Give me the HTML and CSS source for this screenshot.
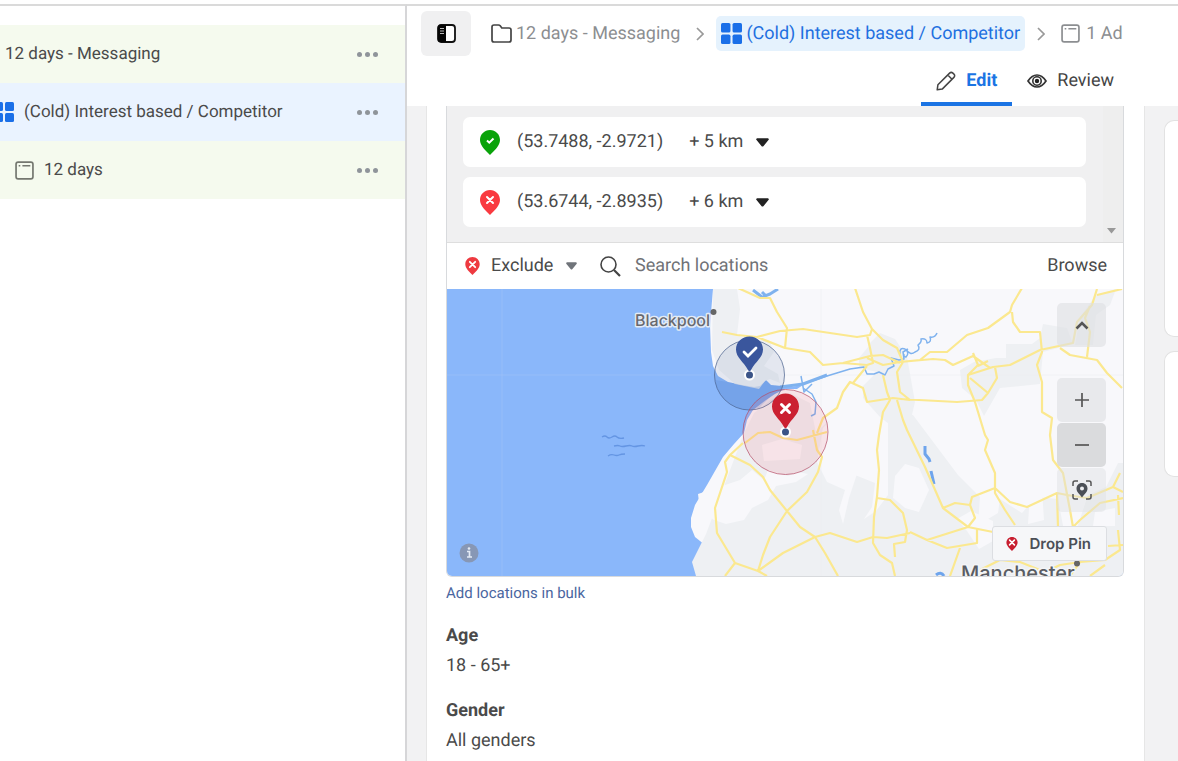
FILE: index.html
```html
<!DOCTYPE html>
<html lang="en">
<head>
<meta charset="utf-8">
<title>Edit ad set</title>
<link rel="stylesheet" href="styles.css">
</head>
<body>
<svg class="defs" width="0" height="0" aria-hidden="true">
  <symbol id="pin" viewBox="0 0 20 25"><path d="M10 0C4.400 0 0 4.400 0 10c0 5.600 5.500 10.500 10 15 4.500-4.500 10-9.400 10-15C20 4.400 15.600 0 10 0z"/></symbol>
  <symbol id="cross" viewBox="0 0 10 10"><path d="M2 2l6 6M8 2l-6 6" fill="none" stroke="#fff" stroke-width="2" stroke-linecap="round"/></symbol>
  <symbol id="grid" viewBox="0 0 20 20"><rect width="9" height="9" rx="1.500"/><rect x="11" width="9" height="9" rx="1.500"/><rect y="11" width="9" height="9" rx="1.500"/><rect x="11" y="11" width="9" height="9" rx="1.500"/></symbol>
  <symbol id="ad" viewBox="0 0 18 18"><rect x="1" y="1" width="16" height="16" rx="2" fill="none" stroke="currentColor" stroke-width="1.600"/><path d="M3.500 4.500h1.500M7 4.500h7.500" stroke="currentColor" stroke-width="1.300"/></symbol>
  <symbol id="dots" viewBox="0 0 21 5"><circle cx="2.500" cy="2.500" r="2.500"/><circle cx="10.500" cy="2.500" r="2.500"/><circle cx="18.500" cy="2.500" r="2.500"/></symbol>
  <symbol id="caret" viewBox="0 0 12 8"><path d="M1 0h10q1.400.600.500 1.800L7 7.200q-1 1.200-2 0L.500 1.800Q-.400.600 1 0z"/></symbol>
  <symbol id="chevron" viewBox="0 0 8 14"><path d="M1 1l6 6-6 6" fill="none" stroke="currentColor" stroke-width="1.700"/></symbol>
</svg>

<div class="app">
  <nav class="tree" aria-label="Campaign structure">
    <div class="tree-row">
      <a class="tree-link campaign" href="#">12 days - Messaging</a>
      <button class="more" aria-label="More options"><svg width="21" height="5"><use href="#dots"/></svg></button>
    </div>
    <div class="tree-row selected">
      <a class="tree-link adset" href="#"><svg class="blue" width="20" height="20"><use href="#grid"/></svg>(Cold) Interest based / Competitor</a>
      <button class="more" aria-label="More options"><svg width="21" height="5"><use href="#dots"/></svg></button>
    </div>
    <div class="tree-row">
      <a class="tree-link ad" href="#"><svg class="soft" width="19" height="19"><use href="#ad"/></svg>12 days</a>
      <button class="more" aria-label="More options"><svg width="21" height="5"><use href="#dots"/></svg></button>
    </div>
  </nav>

  <div class="editor">
    <header class="header">
      <div class="crumbs">
        <button class="toggle" aria-label="Toggle side panel">
          <svg width="19" height="19" viewBox="0 0 19 19"><rect x="1" y="1" width="17" height="17" rx="3" fill="#fff" stroke="#111" stroke-width="1.800"/><path d="M3 1h6v17H3q-2 0-2-2V3q0-2 2-2z" fill="#050505"/><path d="M3 4.500h4M3 7h4M3 9.500h4" stroke="#bbb" stroke-width="1"/></svg>
        </button>
        <a class="crumb folder" href="#"><svg width="21" height="19" viewBox="0 0 21 19"><path d="M1 3q0-2 2-2h4.500q1 0 1.700.800L10.800 4H18q2 0 2 2v10q0 2-2 2H3q-2 0-2-2z" fill="none" stroke="#444" stroke-width="1.700"/></svg>12 days - Messaging</a>
        <svg class="sep" width="8" height="14"><use href="#chevron"/></svg>
        <a class="crumb current" href="#"><svg class="blue" width="21" height="21"><use href="#grid"/></svg>(Cold) Interest based / Competitor</a>
        <svg class="sep" width="8" height="14"><use href="#chevron"/></svg>
        <a class="crumb last" href="#"><svg width="19" height="19"><use href="#ad"/></svg>1 Ad</a>
      </div>
      <div class="tabs" role="tablist">
        <button class="tab active" role="tab" aria-selected="true"><svg width="20" height="20" viewBox="0 0 20 20"><path d="M1.200 18.800l.7-5L13.600 2.100q1.600-1.500 3.300 0l1 1q1.500 1.600 0 3.300L6.200 18.100zM11.800 4l4.200 4.200" fill="none" stroke="#444" stroke-width="1.500" stroke-linejoin="round"/></svg>Edit</button>
        <button class="tab" role="tab" aria-selected="false"><svg width="20" height="14" viewBox="0 0 20 14"><path d="M1 7q4-6 9-6t9 6q-4 6-9 6T1 7z" fill="#fff" stroke="#333" stroke-width="1.700"/><circle cx="10" cy="7" r="4.200" fill="none" stroke="#333" stroke-width="1.600"/><circle cx="10" cy="7" r="2.200" fill="#222"/></svg>Review</button>
      </div>
    </header>

    <div class="body">
      <main class="card">
        <section class="locations" aria-label="Locations">
          <div class="chosen">
            <ul class="list">
              <li class="place">
                <svg width="20" height="25"><use href="#pin" fill="#0aa30a"/><path d="M7 10.500l2.300 2.200L13.500 8.500" fill="none" stroke="#fff" stroke-width="2"/></svg>
                <span class="coords">(53.7488, -2.9721)</span>
                <label class="pick"><select class="radius" aria-label="Radius"><option>+ 5 km</option></select><svg width="13" height="9"><use href="#caret"/></svg></label>
              </li>
              <li class="place">
                <svg width="20" height="25"><use href="#pin" fill="#f93a40"/><use href="#cross" x="5" y="5" width="10" height="10"/></svg>
                <span class="coords">(53.6744, -2.8935)</span>
                <label class="pick"><select class="radius" aria-label="Radius"><option>+ 6 km</option></select><svg width="13" height="9"><use href="#caret"/></svg></label>
              </li>
            </ul>
            <div class="scroller"><svg width="9" height="6" viewBox="0 0 9 6"><path d="M0 0h9L4.500 5.500z" fill="#999"/></svg></div>
          </div>

          <div class="search">
            <svg width="15" height="18"><use href="#pin" fill="#ee3a40" width="15" height="18"/><use href="#cross" x="3" y="3" width="9" height="9"/></svg>
            <label class="pick"><select class="mode" aria-label="Include or exclude"><option>Exclude</option></select><svg class="grey" width="11" height="8"><use href="#caret"/></svg></label>
            <svg class="lens" width="21" height="21" viewBox="0 0 21 21"><circle cx="8.500" cy="8.500" r="7.500" fill="none" stroke="#444" stroke-width="1.600"/><path d="M14 14l6 6" stroke="#444" stroke-width="2.200"/></svg>
            <input class="query" type="text" placeholder="Search locations" aria-label="Search locations">
            <button class="browse">Browse</button>
          </div>

          <div class="map">
            <svg class="terrain" viewBox="447 289 676 287" preserveAspectRatio="xMidYMid slice" role="img" aria-label="Map of Lancashire">
              <rect x="400" y="240" width="800" height="400" fill="#8ab7fa"/>
              <path fill="#f8f8fb" d="M713 240V289L710 325 711 352 713 366 718 376 728 382 742 385 754 387 760 386 766 380 771 385 781 386 790 387 803 385 797 389 785 389 775 394 766 400 753 410 747 420 744 433 734 444 723 457 715 471 707 485 695 505 691 518 691 527 695 537 705 545 708 553 709 563 713 576V640H1200V240z"/>
              <g fill="#eef0f3">
                <path d="M713 289h24l3 20-3 26 12 5 20 0 5 12-10 14 14 8 2 9-10-4-5 2-6 8-24-5-16-14-7-20z"/>
                <path d="M868 345l12-12 15 6 12 18 8 45-6 25-10 4-18-13-18-20 0-12 14-14-18-4 0-10 10-12z"/>
                <path d="M744 433l10-20 18-14 18-6 20 10 6 30 12-12 6 4-3 32 6 8 18 10 20 8-3 24-8 12 12-8 12-16v-80h25l45 60 22 22-2 28 20-12 2-14 22 14 14-16 22 2 6 32 12 0 12-36 18-8 12-24 20 0 16 48v104H713l-5-23-12-16-4-14 14-28z"/>
                <path d="M960 370l14-8 22-4 10 0 0-14 26 0 8-6 3-14 24 4 6 16-30 8-3 32-40 4-16 28-8-16-14-12z"/>
                <path d="M1075 345l5-28 16-22 20-6-6 16-14 10-3 30z"/>
              </g>
              <g fill="#f8f8fb">
                <path d="M740 480l12-10 12 10 4-10 20 6 10-4 10 2-12 8-20 4-8 14-16 8-8 12-18 4-12-4-14-10-2-16z"/>
                <path d="M703 492l12 8-8 14-12-6z"/>
                <path d="M823 428l20-20 34 20-4 34-16 12-8 24-6 26-4-14 6-20-18-8-10-20z"/>
                <path d="M895 476l10-12 14 4 10 22-10 22-14-4-12-10z"/>
                <path d="M957 519l14-8 22 10 0 20-14 8-12-18zM1095 512l20-4 0 18-22 0zM1030 494l12-4 2 30-16 4z"/>
                <path d="M762 445l20-6 20 6-2 14-36 2z"/>
              </g>
              <path d="M447 375H711M502 289V576" fill="none" stroke="#a4c4fa" stroke-opacity=".5"/>
              <path d="M785 375H1123M821 289V576" fill="none" stroke="#eceef2" stroke-opacity=".6"/>
              <g fill="none" stroke="#7fb2ee" stroke-width="1.500" stroke-linejoin="round">
                <path stroke-width="3" d="M780 387L803 384 827 375"/>
                <path d="M803 384L827 376 850 369 864 367 867 374 874 374 879 372 885 375 888 369 894 366 891 358 899 360 904 359 903 352 908 349M801 376l3 16 8-8M803 388l9 6 4 8-1 12-4 2"/>
                <path d="M900 354q-1-7 5-5 5 4 1 8-3 0-2-3M906 349q4 7 9 3 6-2 3-7 4-3 3-6 6-1 6 4 5-1 3-6 5 1 7-4"/>
                <path stroke-width="3" d="M753 290l9 7 8-3 8-5M762 292l3 3"/>
                <path stroke-width="3" stroke="#6ea4ec" d="M925 446l0 8 4 5 1 3M931 471l3 13M936 575q5-4 8 1"/>
              </g>
              <path fill="none" stroke="#fbe88f" stroke-width="2.200" stroke-linejoin="round" d="M738 288L760 298 770 298 777 312 787 328 785 348M722 332L737 335 757 337 780 331 803 329 830 333 857 337 870 335 872 329M855 288L863 312 872 329 883 340 897 348 903 362 897 372 900 392 910 400M757 337L785 348 810 352 823 365 843 363 870 356 883 355 900 363M843 363L867 365 873 363 870 348 867 335M867 358L883 365 900 362M817 433L823 418 837 408 843 392 850 382 863 388 867 402 893 398 910 400M867 366L853 383M883 375L887 392 890 400 883 412 879 435 877 450 879 470 877 497 874 517 873 543 880 555 892 563 895 576M897 400L903 420 907 430 925 467 943 508 968 527 993 532M743 443L730 455 725 462 727 472 715 508 717 533 735 563 758 571 767 576M730 455L750 465 763 477 770 490 787 511 800 527 815 537 825 553 838 576M813 430L817 450 822 457 818 472 807 492 787 511 770 537 763 555 758 571M758 571L783 553 815 537 830 533 857 542 873 537 887 538 910 533M877 498L890 500 903 513 907 530 905 542 894 544 895 557M745 443L758 433 770 432 783 438 797 440 827 432M735 563L725 576M1022 288L1012 305 1010 312 988 328 967 335 947 352 930 352 920 360 900 362 933 359 945 360 953 365 973 356 990 368M1012 312L1013 322 1020 332 1040 332 1042 352 1037 365 1042 382 1042 412 1052 418 1050 435 1053 460 1063 473 1070 510 1073 527 1080 520 1100 503 1123 498M968 375L993 367 1010 365 1040 350 1073 343 1077 322 1092 305 1097 289M1097 295L1122 289M1060 348L1070 355 1097 360 1107 373 1122 388M1087 357L1090 332 1085 318 1090 306M973 353L978 365 968 375 968 385 975 402 985 435 988 440 985 450 995 473 995 493 1005 510 1015 525M995 367L997 378 988 393 982 400 957 402 900 399M970 378L988 393M978 366L988 361M943 508L955 503 970 505 972 497 995 488 1010 502 1027 507 1057 493 1067 495 1087 498 1113 487 1120 473M970 505L975 518 968 527 927 540 910 532M927 540L947 548 977 543 977 528M960 548L950 576M1057 493L1058 527M1113 487L1123 492M1118 495l1 20M980 570L1000 560 1020 562 1045 572 1060 565 1080 562 1105 560 1120 550 1118 530M1080 562L1070 576M1090 576L1105 565M1108 546L1123 545"/>
              <path d="M602 437q3-2 5 0t5 0 5 0 7 1M614 446q4-1 6 0t6 0 6 0 6 0 7 0M608 456q3-2 6-1t5 0 6-1" fill="none" stroke="#6495e3" stroke-width="1.300"/>
              <circle cx="749.500" cy="375" r="35" fill="#3b5998" fill-opacity=".1" stroke="#4f6590" stroke-opacity=".75"/>
              <path d="M728 382l14 3 12 2 6-1 6-6 5 5 11 1-1 4-10 6-12 12q-20 6-35-9-8-9-9-19z" fill="#477fd0" fill-opacity=".2"/>
              <circle cx="785.500" cy="432" r="42.500" fill="#fa3e50" fill-opacity=".11" stroke="#b44b65" stroke-opacity=".7"/>
              <g stroke="#fff" stroke-width="2">
                <circle cx="749.500" cy="375" r="4.500" fill="#3b5487"/><circle cx="785.500" cy="432" r="4.500" fill="#3b5487"/>
              </g>
              <path d="M749.500 336.500c-7.500 0-13.500 5.500-13.500 13 0 8 7.500 12 12 20.500q1.500 2.500 3 0c4.500-8.500 12-12.500 12-20.500 0-7.500-6-13-13.500-13z" fill="#3a569d"/>
              <path d="M744 352l4 4 8-8" fill="none" stroke="#fff" stroke-width="2.800" stroke-linecap="round"/>
              <path d="M785.500 393.500c-7.500 0-13.500 5.500-13.500 13 0 8 7.500 12 12 20.500q1.500 2.500 3 0c4.500-8.500 12-12.500 12-20.500 0-7.500-6-13-13.500-13z" fill="#cb2031"/>
              <path d="M781.500 404.500l8 8M789.500 404.500l-8 8" fill="none" stroke="#fff" stroke-width="3" stroke-linecap="round"/>
              <circle cx="713.500" cy="312" r="3" fill="#666"/><circle cx="1077" cy="563.500" r="3" fill="#666"/>
              <text class="town" x="635" y="326">Blackpool</text>
              <text class="city" x="961" y="580">Manchester</text>
            </svg>
            <div class="controls">
              <button class="ctl" aria-label="Collapse map"><svg width="14" height="9" viewBox="0 0 14 9"><path d="M1.500 7.500L7 2l5.500 5.500" fill="none" stroke="#555" stroke-width="2.600"/></svg></button>
              <div class="zoom">
                <button class="ctl" aria-label="Zoom in"><svg width="14" height="14" viewBox="0 0 14 14"><path d="M7 0v14M0 7h14" stroke="#555" stroke-width="1.700"/></svg></button>
                <button class="ctl dim" aria-label="Zoom out"><svg width="14" height="14" viewBox="0 0 14 14"><path d="M0 7h14" stroke="#555" stroke-width="1.700"/></svg></button>
                <button class="ctl light" aria-label="Centre map"><svg width="20" height="20" viewBox="0 0 20 20"><path d="M1 6V3q0-2 2-2h3M14 1h3q2 0 2 2v3M19 14v3q0 2-2 2h-3M6 19H3q-2 0-2-2v-3" fill="none" stroke="#555" stroke-width="1.500"/><path d="M10 3C6.500 3 4.500 5.500 4.500 8.500c0 3.500 3 5.500 5.500 9 2.500-3.500 5.500-5.500 5.500-9C15.500 5.500 13.500 3 10 3zm0 3.500a2 2 0 010 4 2 2 0 010-4z" fill="#4b4f56" fill-rule="evenodd"/></svg></button>
              </div>
            </div>
            <button class="info" aria-label="Map information"><svg width="20" height="20" viewBox="0 0 20 20"><circle cx="10" cy="10" r="9.500" fill="#8797b5"/><path d="M8 8.500h2.500V14M8 14h5" fill="none" stroke="#e4ebf6" stroke-width="1.700"/><circle cx="10" cy="5.500" r="1.300" fill="#e4ebf6"/></svg></button>
            <button class="drop"><svg width="12" height="14"><use href="#pin" fill="#c81f30" width="12" height="14"/><use href="#cross" x="2" y="1" width="8" height="9"/></svg>Drop Pin</button>
          </div>
        </section>
        <a class="bulk" href="#">Add locations in bulk</a>
        <dl class="facts">
          <dt>Age</dt><dd>18 - 65+</dd>
          <dt>Gender</dt><dd>All genders</dd>
        </dl>
      </main>
      <aside class="side"><div class="panel tall"></div><div class="panel"></div></aside>
    </div>
  </div>
</div>
</body>
</html>
```
FILE: styles.css
```css
* { box-sizing: border-box; }
body { margin: 0; font: 18px/24px Roboto, "Liberation Sans", sans-serif; text-rendering: geometricPrecision; color: #4a4a4a; background: #fff; }
button, select, input { font: inherit; text-rendering: inherit; color: inherit; border: 0; padding: 0; background: none; }
button { cursor: pointer; }
select { appearance: none; }
a { color: inherit; text-decoration: none; }
svg { display: block; flex: none; }
.defs { position: absolute; }
.blue { fill: #1a6fe8; }

.app { display: flex; height: 100vh; padding-top: 4px; overflow: hidden; }
.tree { flex: 0 0 407px; padding-top: 19px; border-top: 2px solid #dadada; border-right: 2px solid #d6d6d8; font-size: 17px; }
.tree-row { display: flex; align-items: center; justify-content: space-between; height: 58px; padding-right: 27px; background: #f5faee; }
.tree-row.selected { background: #eaf3ff; }
.tree-link { display: flex; align-items: center; gap: 10px; white-space: nowrap; }
.campaign { padding-left: 5px; }
.adset { margin-left: -6px; }
.ad { padding-left: 15px; }
.soft { color: #74776f; }
.more { fill: #8f949a; }

.editor { flex: 1; min-width: 0; display: flex; flex-direction: column; border-top: 2px solid #dadada; }
.header { flex: none; height: 100px; padding: 5px 32px 0 14px; display: flex; flex-direction: column; justify-content: space-between; }
.crumbs { display: flex; align-items: center; color: #8c8e91; white-space: nowrap; }
.toggle { display: grid; place-items: center; width: 50px; height: 45px; margin-right: 20px; border-radius: 6px; background: #f0f0f1; }
.crumb { display: flex; align-items: center; gap: 4px; }
.sep { margin: 0 12px 0 16px; color: #999; }
.current { height: 35px; padding: 0 5px; gap: 4px; border-radius: 5px; background: #e5f2fd; color: #1f70e0; }
.current + .sep { margin: 0 16px 0 12px; }
.last { gap: 6px; }
.tabs { display: flex; justify-content: flex-end; padding-right: 32px; color: #444; }
.tab { display: flex; align-items: center; gap: 10px; height: 46px; padding: 0 0 0 15px; border-bottom: 4px solid transparent; }
.tab.active { padding: 0 15px; border-color: #1b74e4; color: #1b74e4; font-weight: 700; }

.body { flex: 1; min-height: 0; display: flex; background: #f2f2f3; padding-left: 19px; }
.card { flex: 1; min-width: 0; padding: 0 20px 0 19px; background: #fff; border: solid #e6e6e6; border-width: 0 1px; }
.locations { border: 1px solid #d8dadd; border-top: 0; border-radius: 0 0 6px 6px; overflow: hidden; }
.chosen { display: flex; background: #f0f0f1; border-bottom: 1px solid #dedede; }
.list { flex: 1; display: grid; gap: 10px; margin: 0; padding: 11px 17px 15px 16px; list-style: none; }
.place { display: flex; align-items: center; height: 50px; padding-left: 17px; border-radius: 7px; background: #fff; }
.place svg { fill: #222; }
.coords { margin: 0 26px 0 17px; }
.pick { display: flex; align-items: center; gap: 12px; }
.search .grey { fill: #70747a; }
.scroller { flex: 0 0 20px; display: flex; align-items: flex-end; justify-content: center; padding: 0 4px 8px 0; background: #eee; }
.search { display: flex; align-items: center; height: 46px; padding: 0 16px 0 18px; }
.search .pick { margin: 0 23px 0 11px; }
.lens { margin-right: 14px; }
.query { flex: 1; min-width: 0; outline: 0; }
.query::placeholder { color: #707276; opacity: 1; }

.map { position: relative; height: 287px; }
.terrain { width: 100%; height: 100%; }
.town, .city { font-family: Inter, sans-serif; paint-order: stroke; stroke-linejoin: round; }
.town { font-size: 16px; font-weight: 500; fill: #67696f; stroke: #e3ebf6; stroke-width: 3px; }
.city { font-size: 20px; font-weight: 500; fill: #5a5d63; stroke: #f4f5f7; stroke-width: 3px; }
.controls { position: absolute; top: 14px; right: 17px; display: grid; gap: 31px; }
.ctl { display: grid; place-items: center; width: 49px; height: 44px; border-radius: 5px; background: rgba(222, 223, 226, .6); }
.zoom { display: grid; gap: 1px; }
.dim { background: rgba(210, 211, 214, .8); }
.light { background: rgba(222, 223, 226, .45); }
.info { position: absolute; left: 12px; bottom: 13px; }
.drop { position: absolute; right: 16px; bottom: 15px; display: flex; align-items: center; gap: 11px; height: 35px; padding: 0 15px 0 13px; background: #f6f7f9; border: 1px solid #dcdee2; border-radius: 3px; font: 600 15px/20px Inter, sans-serif; color: #4b4f56; }

.bulk { display: block; margin-top: 4px; font-size: 15px; color: #4a66a0; }
.facts { margin: 19px 0 0; }
.facts dt { font-weight: 700; }
.facts dd { margin: 6px 0 21px; }
.side { flex: 0 0 33px; display: flex; flex-direction: column; gap: 14px; padding: 14px 0 0 19px; }
.panel { height: 126px; border: 1px solid #e2e2e2; border-right: 0; border-radius: 10px 0 0 10px; background: #fff; }
.panel.tall { height: 217px; }
```
